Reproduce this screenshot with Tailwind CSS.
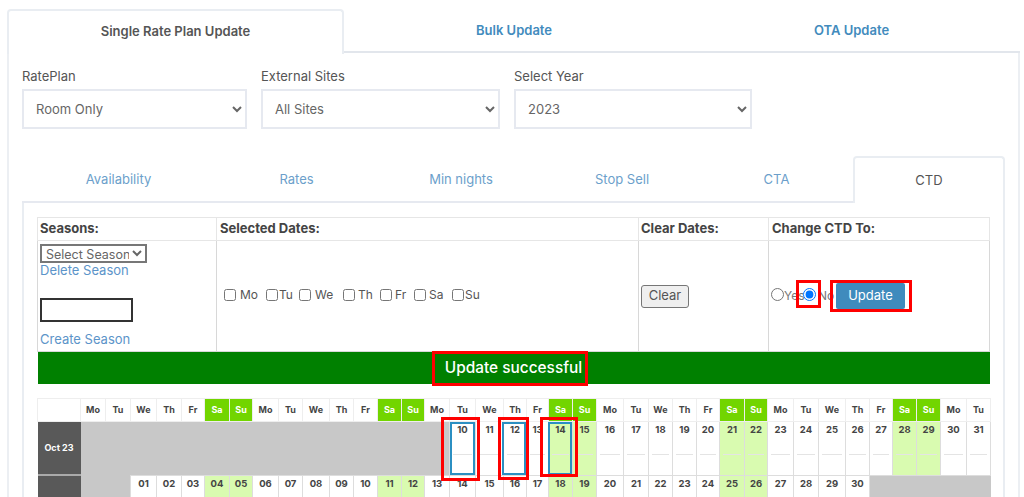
<!DOCTYPE html>
<html lang="en">
  <head>
    <meta charset="UTF-8" />
    <title>Rate Plan Update</title>
    <script src="https://cdn.jsdelivr.net/npm/@tailwindcss/browser@4"></script>
  </head>
  <body class="h-[497px] overflow-hidden bg-white font-['Inter','Noto_Sans',sans-serif] text-[13px] text-[#555]">
    <div class="pt-[9px] pl-[7px] w-[1020px]">
      <!-- top tabs -->
      <div class="flex h-[45px] font-semibold">
        <div class="w-[337px] h-[45px] pb-[2px] bg-white border-2 border-b-0 border-[#e9edf2] rounded-t-[4px] flex items-center justify-center text-[#555] relative z-10">Single Rate Plan Update</div>
        <div class="w-[339px] h-[44px] pt-[2px] border-b-2 border-[#e2e6ec] flex items-center justify-center text-[#428bbd] pl-[1px]">Bulk Update</div>
        <div class="w-[337px] h-[44px] pt-[2px] border-b-2 border-[#e2e6ec] flex items-center justify-center text-[#428bbd]">OTA Update</div>
      </div>

      <div class="border-l-2 border-r-2 border-[#eceff3] h-[500px] pl-[13px] -mt-px w-[1013px]">
        <!-- filters -->
        <div class="flex gap-[14px] pt-[14px]">
          <div class="w-[225px]">
            <label class="block h-[22px] leading-[18px]">RatePlan</label>
            <select class="w-full h-[40px] bg-white border-2 border-[#e6e9f0] pl-[8px] text-[13px] text-[#666]"><option>Room Only</option></select>
          </div>
          <div class="w-[239px]">
            <label class="block h-[22px] leading-[18px]">External Sites</label>
            <select class="w-full h-[40px] bg-white border-2 border-[#e6e9f0] pl-[8px] text-[13px] text-[#666]"><option>All Sites</option></select>
          </div>
          <div class="w-[238px]">
            <label class="block h-[22px] leading-[18px]">Select Year</label>
            <select class="w-full h-[40px] bg-white border-2 border-[#e6e9f0] pl-[8px] text-[13px] text-[#666]"><option>2023</option></select>
          </div>
        </div>

        <!-- inner tabs -->
        <div class="flex h-[47px] mt-[27px] w-[983px] text-[#6c9fcb]">
          <div class="w-[193px] pt-[3px] border-b-2 border-[#e6e9f0] flex items-center justify-center">Availability</div>
          <div class="w-[163px] pt-[3px] border-b-2 border-[#e6e9f0] flex items-center justify-center">Rates</div>
          <div class="w-[166px] pt-[3px] border-b-2 border-[#e6e9f0] flex items-center justify-center">Min nights</div>
          <div class="w-[156px] pt-[3px] border-b-2 border-[#e6e9f0] flex items-center justify-center">Stop Sell</div>
          <div class="w-[153px] pt-[3px] border-b-2 border-[#e6e9f0] flex items-center justify-center">CTA</div>
          <div class="w-[152px] border-2 border-b-0 border-[#e9edf2] rounded-t-[4px] flex items-center justify-center text-[#555]">CTD</div>
        </div>

        <div class="w-[983px] h-[400px] border-l-2 border-r-2 border-[#e9edf2] pl-[13px] pt-[14px]">
          <!-- seasons and update form -->
          <table class="table-fixed border-collapse w-[953px] text-[13px]">
            <thead>
              <tr class="h-[23px] text-left font-bold text-[#444]">
                <th class="w-[179px] border border-[#e6e6e6] pl-[2px] py-0">Seasons:</th>
                <th class="w-[422px] border border-[#e6e6e6] pl-[3px] py-0">Selected Dates:</th>
                <th class="w-[130px] border border-[#e6e6e6] pl-[2px] py-0">Clear Dates:</th>
                <th class="border border-[#e6e6e6] pl-[3px] py-0">Change CTD To:</th>
              </tr>
            </thead>
            <tbody>
              <tr class="h-[111px]">
                <td class="border border-[#d8d8d8] pl-[2px] align-top pt-[3px]">
                  <select class="block w-[107px] h-[19px] border-2 border-[#777] bg-white text-[12.5px] leading-none text-[#666]"><option>Select Season</option></select>
                  <a class="block text-[#5c94c9] leading-[17px] mt-[-1px]">Delete Season</a>
                  <input class="block w-[93px] h-[24px] mt-[19px] border-2 border-[#333] bg-white" />
                  <a class="block text-[#5c94c9] leading-[17px] mt-[9px]">Create Season</a>
                </td>
                <td class="border border-[#d8d8d8] pl-[7px] align-middle">
                  <div class="flex items-center pb-[2px] text-[12px]">
                    <input type="checkbox" class="w-[12px] h-[12px] m-0" /><span class="ml-[4px] w-[26px]">Mo</span>
                    <input type="checkbox" class="w-[12px] h-[12px] m-0" /><span class="ml-[1px] w-[20px]">Tu</span>
                    <input type="checkbox" class="w-[12px] h-[12px] m-0" /><span class="ml-[4px] w-[28px]">We</span>
                    <input type="checkbox" class="w-[12px] h-[12px] m-0" /><span class="ml-[3px] w-[22px]">Th</span>
                    <input type="checkbox" class="w-[12px] h-[12px] m-0" /><span class="ml-[3px] w-[19px]">Fr</span>
                    <input type="checkbox" class="w-[12px] h-[12px] m-0" /><span class="ml-[3px] w-[23px]">Sa</span>
                    <input type="checkbox" class="w-[12px] h-[12px] m-0" /><span class="ml-[1px]">Su</span>
                  </div>
                </td>
                <td class="border border-[#d8d8d8] pl-[2px] align-middle">
                  <button class="block w-[48px] h-[23px] bg-[#efefef] border border-[#767676] rounded-[3px] text-[13px] text-[#555]">Clear</button>
                </td>
                <td class="border border-[#d8d8d8] pl-[2px] align-middle">
                  <div class="flex items-center text-[12px] text-[#777]">
                    <input type="radio" name="ctd" class="w-[13px] h-[13px] m-0 mb-[3px]" /><span class="w-[19px]">Yes</span>
                    <span class="relative z-10 flex">
                      <input type="radio" name="ctd" checked class="w-[13px] h-[13px] m-0 mb-[3px]" />
                      <span class="absolute left-[-7px] top-[-8px] w-[25px] h-[28px] border-[3px] border-[#f00]"></span>
                    </span>
                    <span class="ml-[2px] w-[18px]">No</span>
                    <span class="relative">
                      <button class="block w-[69px] h-[26px] bg-[#3f8bbd] rounded-[2px] text-[13px] text-white">Update</button>
                      <span class="absolute left-[-6px] top-[-3px] w-[82px] h-[32px] border-[3px] border-[#f00]"></span>
                    </span>
                  </div>
                </td>
              </tr>
              <tr class="h-[32px] bg-[#008000]">
                <td colspan="4" class="p-0 text-center text-[15.4px] text-white font-medium">
                  <span class="relative">Update successful<span class="absolute left-[-13px] right-[-6px] top-[-7px] h-[35px] border-[3px] border-[#f00]"></span></span>
                </td>
              </tr>
            </tbody>
          </table>

          <!-- calendar -->
          <table id="calendar" class="table-fixed border-collapse w-[953px] mt-[14px] text-[9px] font-bold text-[#444]"></table>
        </div>
      </div>
    </div>

    <script>
      // column right edges as read off the grid
      const edges = [37,80,105,130,156,181,204,229,252,278,302,329,353,377,401,424,449,475,503,526,548,572,596,623,648,672,696,719,744,767,793,818,845,869,892,916,940,966,990];
      const days = ["Mo","Tu","We","Th","Fr","Sa","Su"];
      // highlighted dates in October: red box, then blue box
      const marked = {
        10: ["left-[-9px] top-[-5px] w-[39px] h-[64px]", "left-0 right-0 top-0 bottom-0"],
        12: ["left-[-6px] top-[-5px] w-[31px] h-[63px]", "left-[-2px] right-0 top-0 bottom-0"],
        14: ["left-[-9px] top-[-5px] w-[38px] h-[60px]", "left-[-1px] right-0 top-0 bottom-0"],
      };
      let html = "<colgroup>";
      for (let i = 1; i < edges.length; i++) {
        html += '<col style="width:' + (edges[i] - edges[i - 1]) + 'px">';
      }
      html += '</colgroup><tr class="h-[23px]"><th class="border border-[#eee]"></th>';
      for (let i = 0; i < 37; i++) {
        let weekend = i % 7 > 4;
        html += '<th class="p-0 text-center border border-[#eee] ' + (weekend ? "bg-[#72d500] text-white" : "") + '">' + days[i % 7] + "</th>";
      }
      html += "</tr>";

      function cell(day, col, mark) {
        let weekend = col % 7 > 4;
        let extra = "";
        if (mark) {
          extra = '<span class="absolute border-2 border-[#2b8fc2] ' + mark[1] + '"></span>' +
            '<span class="absolute z-10 border-[3px] border-[#f00] ' + mark[0] + '"></span>';
        }
        return '<td class="relative p-0 align-top text-center border border-[#ddd] ' + (weekend ? "bg-[#d9fbb0]" : "bg-white") + '">' +
          '<div class="pt-[2px] leading-[12px] text-[9.5px]">' + day + "</div>" +
          '<div class="mx-auto mt-[18px] w-3/4 border-t border-[#e4e4e4]"></div>' + extra + "</td>";
      }

      function row(label, lead, first, last, marks) {
        let out = '<tr class="h-[54px]"><td class="p-0 text-center bg-[#595959] text-white border-b-2 border-[#aaa]">' + label + "</td>";
        out += '<td colspan="' + lead + '" class="p-0 bg-[#c8c8c8]"></td>';
        let col = lead;
        for (let d = first; d <= last; d++) {
          out += cell(String(d).padStart(2, "0"), col, marks[d]);
          col++;
        }
        if (col < 37) out += '<td colspan="' + (37 - col) + '" class="p-0 bg-[#c8c8c8]"></td>';
        return out + "</tr>";
      }

      html += row("Oct 23", 15, 10, 31, marked);
      html += row("", 2, 1, 30, {});
      document.getElementById("calendar").innerHTML = html;
    </script>
  </body>
</html>
